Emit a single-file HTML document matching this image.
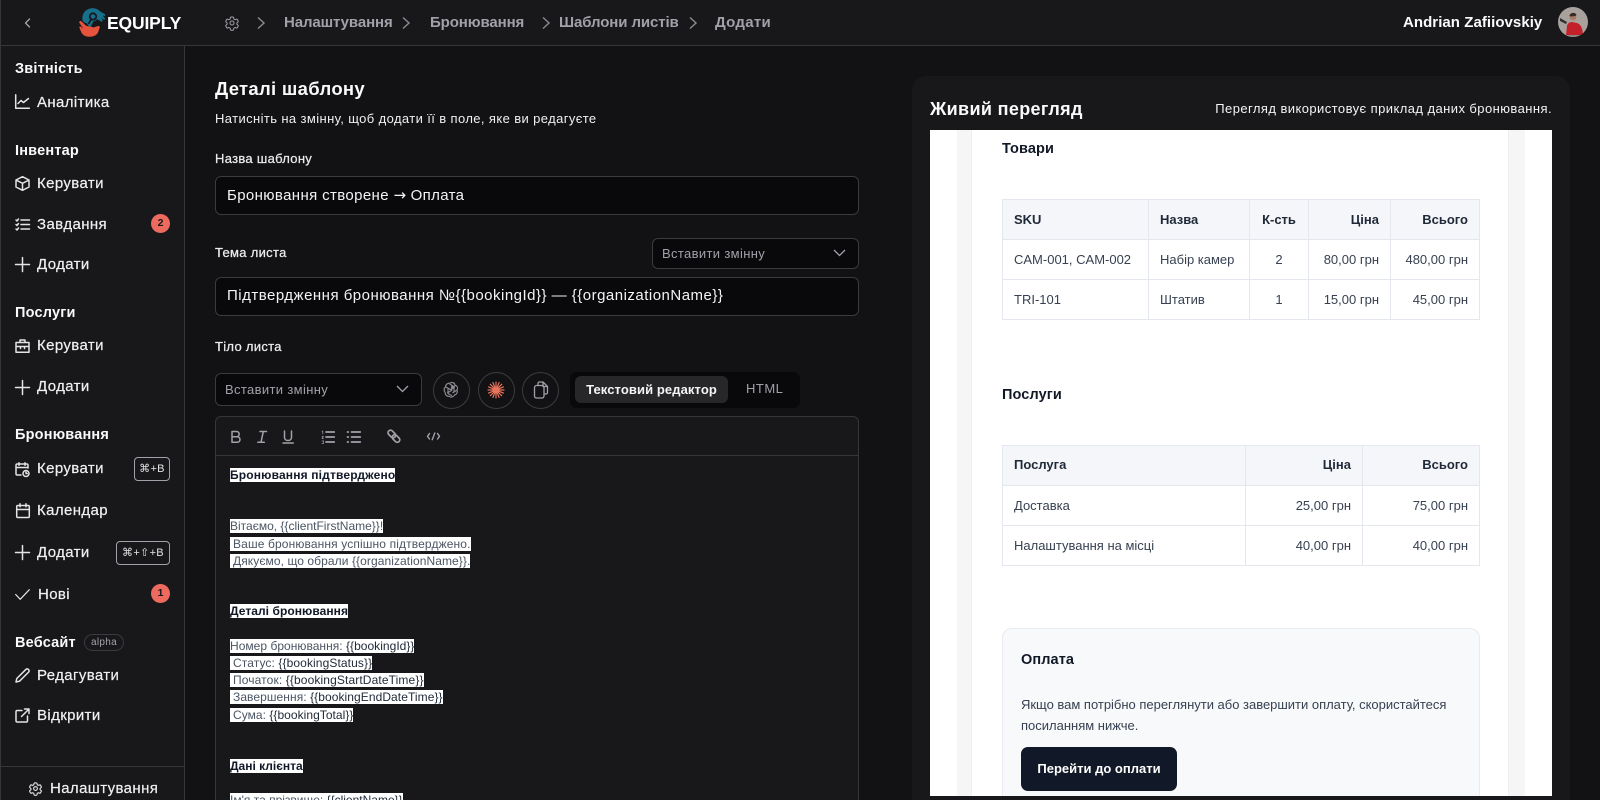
<!DOCTYPE html>
<html lang="uk"><head><meta charset="utf-8"><title>Equiply</title>
<style>
*{box-sizing:border-box}
html,body{margin:0;padding:0;width:1600px;height:800px;overflow:hidden;background:#121214;font-family:"Liberation Sans",sans-serif;color:#fafafa}
#root{position:absolute;left:0;top:0;width:1600px;height:800px;overflow:hidden;background:#121214}
.a{position:absolute}
.t{position:absolute;white-space:nowrap;line-height:20px}
svg{position:absolute;overflow:visible}
.i{fill:none;stroke:#e4e4e7;stroke-width:1.5;stroke-linecap:round;stroke-linejoin:round}
.h{font-size:14.5px;font-weight:700;color:#fafafa;left:15px;letter-spacing:.2px}
.n{font-size:15px;color:#f0f0f2;left:37px;letter-spacing:.38px;-webkit-text-stroke:.2px #f0f0f2}
.c{font-size:15px;font-weight:700;color:#a1a1aa;letter-spacing:-.1px}
.l{font-size:13px;left:215px;color:#ececef;letter-spacing:.3px;font-weight:400;-webkit-text-stroke:.25px #ececef}
.inp{position:absolute;left:215px;width:644px;height:39px;background:#09090b;border:1px solid #3a3a3f;border-radius:6px;font-size:15px;line-height:37px;padding-left:11px;color:#f4f4f5;white-space:nowrap;letter-spacing:.37px}
.sel{position:absolute;background:#09090b;border:1px solid #3a3a3f;border-radius:6px;font-size:13px;color:#a1a1aa;padding-left:9px;letter-spacing:.35px}
.cir{position:absolute;width:37px;height:37px;border:1px solid #3c3c41;border-radius:50%;top:372px}
.e{position:absolute;left:230px;height:14px;line-height:14px;background:#fff;color:#4b5563;font-size:12px;white-space:nowrap}
.e b{color:#111827}
.e i{font-style:normal;color:#1f2937}
.kbd{position:absolute;border:1px solid #a1a1aa;border-radius:4px;height:24px;font-size:11px;line-height:22px;text-align:center;color:#e4e4e7;letter-spacing:.3px}
.bd{position:absolute;left:151px;width:19px;height:19px;border-radius:50%;background:#ec6a5e;color:#18181b;font-size:10.5px;font-weight:700;text-align:center;line-height:19px}
.p{position:absolute;color:#374151;font-size:13px;line-height:20px;white-space:nowrap}
.th{color:#1f2937;font-weight:700}
.r{text-align:right}
.hl{position:absolute;background:#e5e7ef}
.cell{background:#f5f6fa;position:absolute}
</style></head><body><div id="root">

<!-- top bar -->
<div class="a" style="left:0;top:0;width:1600px;height:46px;background:#18181b;border-bottom:1px solid #36363a"></div>
<div class="a" style="left:0;top:0;width:1px;height:800px;background:#36363a;z-index:3"></div>
<svg style="left:22px;top:17px" width="12" height="12" viewBox="0 0 12 12"><path d="M7.5 2 3.5 6l4 4" fill="none" stroke="#a1a1aa" stroke-width="1.4" stroke-linecap="round" stroke-linejoin="round"/></svg>

<!-- logo -->
<svg style="left:78px;top:7px" width="30" height="31" viewBox="0 0 30 31">
<path d="M4.500 13C3.500 6 8.500 1.200 14.500 1.200c3 0 5.800 1 7.300 3l5 2.800c1 .8.300 2.200-1 1.900l-1.500-.6 2.500 2.700c.8 1-.3 2.200-1.400 1.500l-2.500-2 1.700 2.700c.5 1.100-.8 2-1.700 1.200L19 12c-1 1.500-2 2-3.500 2.300l-3 5.700c-2-1-3-2-3.500-3.500C7 16 5 15 4.500 13z" fill="#16708c"/>
<circle cx="15" cy="9.500" r="3.200" fill="none" stroke="#18181b" stroke-width="1.800"/>
<path d="M13 12.500l-2.500 4.500" stroke="#18181b" stroke-width="1.800"/>
<path d="M1.500 14.500c.6-.8 1.500-.6 2.200 0l3.800 3.700c1.500 1.300 3 .8 5 1.300l3 1 4.500-1.500c1.500-.3 2.200 1 1.500 2.200l-1.500 4.300c-1.500 3-4.500 4.200-8.500 4.200-3.500 0-6.500-1.300-8-4L1.500 21c-.6-1.200.6-2 1.500-1.200l2.500 2.200L1.500 16c-.4-.6-.3-1 0-1.500z" fill="#e5533d"/>
</svg>
<div class="t" style="left:107px;top:13px;font-size:17.500px;font-weight:700;color:#fff;letter-spacing:-.15px">EQUIPLY</div>

<!-- breadcrumb -->
<svg style="left:224px;top:15px" width="16" height="16" viewBox="0 0 24 24"><g fill="none" stroke="#a1a1aa" stroke-width="1.500" stroke-linecap="round" stroke-linejoin="round"><path d="M9.600 3.900c.1-.5.600-.9 1.100-.9h2.600c.5 0 1 .4 1.100.9l.2 1.600c.1.400.3.700.7.900l.7.400c.3.200.7.200 1.100.1l1.500-.6c.5-.2 1.100 0 1.400.5l1.300 2.300c.3.500.2 1-.3 1.400l-1.200 1c-.3.200-.5.600-.5 1v.8c0 .4.200.8.500 1l1.200 1c.5.400.6.900.3 1.400l-1.300 2.300c-.3.500-.9.700-1.400.5l-1.500-.6c-.4-.1-.8-.1-1.100.1l-.7.400c-.4.200-.6.500-.7.900l-.2 1.600c-.1.500-.6.900-1.100.9h-2.600c-.5 0-1-.4-1.100-.9l-.2-1.600c-.1-.4-.3-.7-.7-.9l-.7-.4c-.3-.2-.7-.2-1.100-.1l-1.500.6c-.5.200-1.100 0-1.400-.5l-1.300-2.300c-.3-.5-.2-1 .3-1.400l1.200-1c.3-.2.500-.6.500-1v-.8c0-.4-.2-.8-.5-1l-1.200-1c-.5-.4-.6-.9-.3-1.400l1.300-2.300c.3-.5.900-.7 1.400-.5l1.500.6c.4.100.8.100 1.100-.1l.7-.4c.4-.2.600-.5.700-.9z"/><circle cx="12" cy="12" r="3"/></g></svg>
<svg style="left:256px;top:16px" width="10" height="14" viewBox="0 0 10 14"><path d="M2 1.500 8 7l-6 5.500" fill="none" stroke="#8a8a92" stroke-width="1.400"/></svg>
<div class="t c" style="left:284px;top:13px">Налаштування</div>
<svg style="left:401px;top:16px" width="10" height="14" viewBox="0 0 10 14"><path d="M2 1.500 8 7l-6 5.500" fill="none" stroke="#8a8a92" stroke-width="1.400"/></svg>
<div class="t c" style="left:430px;top:13px">Бронювання</div>
<svg style="left:541px;top:16px" width="10" height="14" viewBox="0 0 10 14"><path d="M2 1.500 8 7l-6 5.500" fill="none" stroke="#8a8a92" stroke-width="1.400"/></svg>
<div class="t c" style="left:559px;top:13px">Шаблони листів</div>
<svg style="left:688px;top:16px" width="10" height="14" viewBox="0 0 10 14"><path d="M2 1.500 8 7l-6 5.500" fill="none" stroke="#8a8a92" stroke-width="1.400"/></svg>
<div class="t c" style="left:715px;top:13px;letter-spacing:.3px">Додати</div>

<div class="t" style="left:1403px;top:13px;font-size:15px;font-weight:700;color:#fafafa;letter-spacing:.05px">Andrian Zafiiovskiy</div>
<svg style="left:1558px;top:7px" width="30" height="30" viewBox="0 0 30 30"><defs><clipPath id="av"><circle cx="15" cy="15" r="15"/></clipPath></defs><g clip-path="url(#av)"><rect width="30" height="30" fill="#a8a19c"/><path d="M8 28l1-9c.5-3 3-4 5-4l5 1c3 1 5 4 5.500 8l.5 4z" fill="#c4202a"/><circle cx="15" cy="10" r="3.300" fill="#a87a68"/><path d="M11.500 9c0-3.500 6-4.500 7-1l-1 1-5 .5z" fill="#3a2a26"/><path d="M2 11l7 4-1 2-6-3z" fill="#2f2f2f"/><rect x="0" y="28" width="30" height="2" fill="#8c8682"/></g></svg>

<!-- sidebar -->
<div class="a" style="left:0;top:46px;width:185px;height:754px;background:#18181b;border-right:1px solid #36363a"></div>
<div class="a" style="left:0;top:766px;width:185px;height:1px;background:#36363a"></div>

<div class="t h" style="top:59px">Звітність</div>
<svg class="i" style="left:15px;top:94px" width="15" height="15" viewBox="0 0 15 15"><path d="M.7.7v13.600h13.600M3 9.500l3-3 2.500 2L13.500 4.500"/></svg>
<div class="t n" style="top:93px">Аналітика</div>

<div class="t h" style="top:141px">Інвентар</div>
<svg class="i" style="left:15px;top:176px" width="15" height="15" viewBox="0 0 15 15"><path d="M7.500.7l6.500 3.300v7L7.500 14.300 1 11V4zM1 4l6.500 3.300L14 4M7.500 7.300v7"/></svg>
<div class="t n" style="top:174px">Керувати</div>

<svg class="i" style="left:15px;top:218px" width="15" height="13" viewBox="0 0 15 13"><path d="M1 2l1 1 1.500-2M1 6.500l1 1 1.500-2M1 11l1 1 1.500-2M6 2h8.500M6 6.500h8.500M6 11h8.500"/></svg>
<div class="t n" style="top:215px">Завдання</div>
<div class="bd" style="top:214px">2</div>

<svg class="i" style="left:15px;top:257px" width="15" height="15" viewBox="0 0 15 15"><path d="M7.500.5v14M.5 7.500h14"/></svg>
<div class="t n" style="top:255px">Додати</div>

<div class="t h" style="top:303px">Послуги</div>
<svg class="i" style="left:15px;top:339px" width="15" height="14" viewBox="0 0 15 14"><path d="M1 3.500h13v9.800H1zM5 3.500V1h5v2.500M1 7.500h13M5.500 7.500v2M9.500 7.500v2"/></svg>
<div class="t n" style="top:336px">Керувати</div>

<svg class="i" style="left:15px;top:380px" width="15" height="15" viewBox="0 0 15 15"><path d="M7.500.5v14M.5 7.500h14"/></svg>
<div class="t n" style="top:377px">Додати</div>

<div class="t h" style="top:425px">Бронювання</div>
<svg class="i" style="left:15px;top:462px" width="15" height="15" viewBox="0 0 15 15"><path d="M6 13H2.200C1.500 13 1 12.500 1 11.800V3.200C1 2.500 1.500 2 2.200 2h9.600c.7 0 1.200.5 1.200 1.200V6M4 .7v2.500M10 .7v2.500M1 5.500h12"/><circle cx="11" cy="11.500" r="3"/><path d="M11 10v1.500h1.200"/></svg>
<div class="t n" style="top:459px">Керувати</div>
<div class="kbd" style="left:134px;top:457px;width:36px">⌘+B</div>

<svg class="i" style="left:16px;top:503px" width="14" height="15" viewBox="0 0 14 15"><path d="M1.800 2.500h10.400c.6 0 1.100.5 1.100 1.100v9.800c0 .6-.5 1.100-1.100 1.100H1.800c-.6 0-1.100-.5-1.100-1.100V3.600c0-.6.500-1.100 1.100-1.100zM4 .7v3M10 .7v3M.7 6.500h12.600"/></svg>
<div class="t n" style="top:501px">Календар</div>

<svg class="i" style="left:15px;top:545px" width="15" height="15" viewBox="0 0 15 15"><path d="M7.500.5v14M.5 7.500h14"/></svg>
<div class="t n" style="top:543px">Додати</div>
<div class="kbd" style="left:116px;top:541px;width:54px">⌘+⇧+B</div>

<svg style="left:15px;top:589px" width="15" height="11" viewBox="0 0 15 11"><path d="M.7 5.500l4.500 4.800L14.300.7" fill="none" stroke="#e4e4e7" stroke-width="1.200" stroke-linecap="round" stroke-linejoin="round"/></svg>
<div class="t n" style="left:38px;top:585px">Нові</div>
<div class="bd" style="top:584px">1</div>

<div class="t h" style="top:633px">Вебсайт</div>
<div class="a" style="left:84px;top:634px;width:40px;height:17px;border:1px solid #3a3a3f;border-radius:9px;font-size:10px;line-height:15px;text-align:center;color:#a1a1aa;letter-spacing:.3px">alpha</div>
<svg class="i" style="left:15px;top:668px" width="15" height="15" viewBox="0 0 15 15"><path d="M1 14l.8-3.500L11 1.300c.6-.6 1.600-.6 2.200 0l.5.500c.6.6.6 1.600 0 2.200L4.500 13.200z"/></svg>
<div class="t n" style="top:666px">Редагувати</div>
<svg class="i" style="left:15px;top:708px" width="15" height="15" viewBox="0 0 15 15"><path d="M7 2.500H2.200C1.500 2.500 1 3 1 3.700v9.100c0 .7.500 1.200 1.200 1.200h9.100c.7 0 1.200-.5 1.200-1.200V8M6.500 8.500 14 1M9.500 1H14v4.500"/></svg>
<div class="t n" style="top:706px">Відкрити</div>

<svg style="left:28px;top:781px" width="15" height="15" viewBox="0 0 24 24"><g fill="none" stroke="#e4e4e7" stroke-width="1.800" stroke-linecap="round" stroke-linejoin="round"><path d="M9.600 3.900c.1-.5.600-.9 1.100-.9h2.600c.5 0 1 .4 1.100.9l.2 1.600c.1.400.3.700.7.900l.7.400c.3.200.7.200 1.100.1l1.500-.6c.5-.2 1.100 0 1.400.5l1.300 2.300c.3.500.2 1-.3 1.400l-1.200 1c-.3.200-.5.600-.5 1v.8c0 .4.200.8.500 1l1.200 1c.5.400.6.900.3 1.400l-1.300 2.300c-.3.500-.9.700-1.400.5l-1.500-.6c-.4-.1-.8-.1-1.100.1l-.7.400c-.4.200-.6.500-.7.900l-.2 1.600c-.1.500-.6.900-1.100.9h-2.600c-.5 0-1-.4-1.100-.9l-.2-1.600c-.1-.4-.3-.7-.7-.9l-.7-.4c-.3-.2-.7-.2-1.100-.1l-1.500.6c-.5.200-1.100 0-1.400-.5l-1.300-2.300c-.3-.5-.2-1 .3-1.400l1.200-1c.3-.2.500-.6.500-1v-.8c0-.4-.2-.8-.5-1l-1.200-1c-.5-.4-.6-.9-.3-1.400l1.300-2.300c.3-.5.900-.7 1.400-.5l1.500.6c.4.100.8.100 1.100-.1l.7-.4c.4-.2.600-.5.700-.9z"/><circle cx="12" cy="12" r="3"/></g></svg>
<div class="t n" style="left:50px;top:779px">Налаштування</div>

<!-- form -->
<div class="t" style="left:215px;top:79px;font-size:18.500px;font-weight:700;color:#fafafa;letter-spacing:.3px">Деталі шаблону</div>
<div class="t" style="left:215px;top:109px;font-size:13px;color:#f0f0f2;letter-spacing:.39px">Натисніть на змінну, щоб додати її в поле, яке ви редагуєте</div>

<div class="t l" style="top:149px">Назва шаблону</div>
<div class="inp" style="top:176px">Бронювання створене <span style="font-family:'DejaVu Sans',sans-serif;letter-spacing:0">→</span> Оплата</div>
<div class="t l" style="top:243px">Тема листа</div>
<div class="sel" style="left:652px;top:238px;width:207px;height:31px;line-height:29px">Вставити змінну</div>
<svg style="left:833px;top:249px" width="13" height="8" viewBox="0 0 13 8"><path d="M1 1l5.500 5.500L12 1" fill="none" stroke="#a1a1aa" stroke-width="1.300"/></svg>
<div class="inp" style="top:277px;height:39px;line-height:35px;letter-spacing:.49px">Підтвердження бронювання №{{bookingId}} — {{organizationName}}</div>
<div class="t l" style="top:337px">Тіло листа</div>

<div class="sel" style="left:215px;top:373px;width:207px;height:33px;line-height:31px">Вставити змінну</div>
<svg style="left:396px;top:385px" width="13" height="8" viewBox="0 0 13 8"><path d="M1 1l5.500 5.500L12 1" fill="none" stroke="#a1a1aa" stroke-width="1.300"/></svg>

<div class="cir" style="left:433px"></div>
<svg style="left:443px;top:381px" width="18" height="18" viewBox="0 0 18 18"><g fill="none" stroke="#8f8f96" stroke-width="1.100"><path d="M7 2.200c2-1.500 4.600-.5 5 1.800 2.200.6 3.200 3 2 5 1 2.200-.3 4.500-2.500 5-1 2-3.500 2.800-5.500 1.300-2.200.2-4-1.600-3.800-3.800C.7 10 .7 7.300 2.500 6 2.500 3.600 4.700 1.800 7 2.200z"/><path d="M6.500 3l4.500 2.600v5M3 6l4.500 2.600 4.300-2.500M4.200 12l4.500-2.600 0-5M12.500 4.500 8 7M9 14.800l-4-2.300v-5M14 9l-4.500 3"/></g></svg>

<div class="cir" style="left:478px"></div>
<svg style="left:487px;top:381px" width="18" height="18" viewBox="0 0 18 18"><g stroke="#e8735a" stroke-width="1.200" stroke-linecap="round"><path d="M9 1v16M1 9h16M3.300 3.300l11.400 11.400M14.700 3.300 3.300 14.700M5.900 1.600l6.200 14.800M12.100 1.600 5.900 16.400M1.600 5.900l14.800 6.200M1.600 12.100l14.800-6.200"/></g><circle cx="9" cy="9" r="2.200" fill="#e8735a"/></svg>

<div class="cir" style="left:522px"></div>
<svg style="left:533px;top:381px" width="16" height="18" viewBox="0 0 16 18"><g fill="none" stroke="#a1a1aa" stroke-width="1.300" stroke-linejoin="round"><path d="M5 4V2.500C5 1.700 5.500 1 6.300 1H10l4.500 4.500v6c0 .8-.6 1.500-1.400 1.500H11.500"/><path d="M10 1v4.500h4.500"/><rect x="1.500" y="4.500" width="9.500" height="12.500" rx="2"/></g></svg>

<div class="a" style="left:570px;top:372px;width:230px;height:36px;background:#09090b;border-radius:7px"></div>
<div class="a" style="left:575px;top:376px;width:153px;height:27px;background:#27272a;border-radius:6px;font-size:13px;font-weight:700;color:#f4f4f5;line-height:27px;text-align:center;letter-spacing:.1px">Текстовий редактор</div>
<div class="t" style="left:746px;top:379px;font-size:13px;color:#a1a1aa;font-weight:400;letter-spacing:.5px">HTML</div>

<!-- editor -->
<div class="a" style="left:215px;top:416px;width:644px;height:400px;background:#18181b;border:1px solid #36363a;border-radius:6px 6px 0 0"></div>
<div class="a" style="left:215px;top:455px;width:644px;height:1px;background:#36363a"></div>
<svg style="left:220px;top:422px" width="230" height="30" viewBox="0 0 230 30"><g fill="none" stroke="#a1a1aa" stroke-width="1.500" stroke-linecap="round" stroke-linejoin="round">
<path d="M12 9.500h4.500c3.500 0 3.500 5.200 0 5.200H12zM12 14.700h5.200c3.700 0 3.700 5.600 0 5.600H12z"/>
<path d="M40 9.500h6.500M37.800 20.300h6.500M43.300 9.500l-2.300 10.800"/>
<path d="M64.500 9v6.500c0 4 7 4 7 0V9M63 21h10.300"/>
<path d="M106 10h8.300M106 15h8.300M106 20h8.300" stroke-width="1.700"/><path d="M102 9.500l.8-.5v3M102 14.500h1.500l-1.500 2h1.500M102 19h1.500v2.500H102" stroke-width=".7"/>
<path d="M131.500 10h8.800M131.500 15h8.800M131.500 20h8.800M127.500 10h.8M127.500 15h.8M127.500 20h.8" stroke-width="1.700"/>
<rect x="-4.300" y="-2.500" width="8.600" height="5" rx="2.500" transform="translate(171.800 12) rotate(45)" stroke-width="1.700"/>
<rect x="-4.300" y="-2.500" width="8.600" height="5" rx="2.500" transform="translate(176 16.500) rotate(45)" stroke-width="1.700"/>
<path d="M209.500 11.500 207.500 14.300l2 2.700M217.500 11.500l2 2.800-2 2.700M214.800 11l-2.600 6.700" stroke-width="1.400"/>
</g></svg>

<div class="e" style="top:468px;font-weight:700;letter-spacing:.16px"><b>Бронювання підтверджено</b></div>
<div class="e" style="top:519px">Вітаємо, <i style="color:#4b5563">{{clientFirstName}}</i>!</div>
<div class="e" style="top:537px;padding-left:3px;letter-spacing:.13px">Ваше бронювання успішно підтверджено.</div>
<div class="e" style="top:554px;padding-left:3px;letter-spacing:.08px">Дякуємо, що обрали <i style="color:#4b5563">{{organizationName}}</i>.</div>
<div class="e" style="top:604px;font-weight:700;letter-spacing:.06px"><b>Деталі бронювання</b></div>
<div class="e" style="top:639px;letter-spacing:.03px">Номер бронювання: <i>{{bookingId}}</i></div>
<div class="e" style="top:656px;padding-left:3px;letter-spacing:.1px">Статус: <i>{{bookingStatus}}</i></div>
<div class="e" style="top:673px;padding-left:3px;letter-spacing:.12px">Початок: <i>{{bookingStartDateTime}}</i></div>
<div class="e" style="top:690px;padding-left:3px;letter-spacing:.07px">Завершення: <i>{{bookingEndDateTime}}</i></div>
<div class="e" style="top:708px;padding-left:3px;letter-spacing:.04px">Сума: <i>{{bookingTotal}}</i></div>
<div class="e" style="top:759px;font-weight:700"><b>Дані клієнта</b></div>
<div class="e" style="top:793px">Ім'я та прізвище: <i>{{clientName}}</i></div>

<!-- preview card -->
<div class="a" style="left:912px;top:76px;width:658px;height:740px;background:#18181b;border-radius:14px"></div>
<div class="t" style="left:930px;top:99px;font-size:18px;font-weight:700;color:#fafafa;letter-spacing:.35px">Живий перегляд</div>
<div class="t" style="right:48px;top:99px;font-size:13px;color:#f4f4f5;letter-spacing:.43px">Перегляд використовує приклад даних бронювання.</div>

<div class="a" style="left:930px;top:130px;width:622px;height:666px;background:#fff;overflow:hidden">
 <div class="a" style="left:27px;top:0;width:568px;height:666px;background:#f6f6f7"></div>
 <div class="a" style="left:41px;top:0;width:538px;height:666px;background:#fff;border-left:1px solid #eeeff1;border-right:1px solid #eeeff1"></div>
</div>

<div class="t" style="left:1002px;top:139px;font-size:14.500px;font-weight:700;color:#111827;letter-spacing:.1px">Товари</div>

<!-- table 1 -->
<div class="cell" style="left:1002px;top:199px;width:477px;height:41px"></div>
<div class="hl" style="left:1002px;top:199px;width:478px;height:1px"></div>
<div class="hl" style="left:1002px;top:239px;width:478px;height:1px"></div>
<div class="hl" style="left:1002px;top:279px;width:478px;height:1px"></div>
<div class="hl" style="left:1002px;top:319px;width:478px;height:1px"></div>
<div class="hl" style="left:1002px;top:199px;width:1px;height:121px"></div>
<div class="hl" style="left:1148px;top:199px;width:1px;height:121px"></div>
<div class="hl" style="left:1249px;top:199px;width:1px;height:121px"></div>
<div class="hl" style="left:1308px;top:199px;width:1px;height:121px"></div>
<div class="hl" style="left:1390px;top:199px;width:1px;height:121px"></div>
<div class="hl" style="left:1479px;top:199px;width:1px;height:121px"></div>

<div class="p th" style="left:1014px;top:210px">SKU</div>
<div class="p th" style="left:1160px;top:210px">Назва</div>
<div class="p th" style="left:1249px;top:210px;width:60px;text-align:center">К-сть</div>
<div class="p th r" style="left:1309px;top:210px;width:70px">Ціна</div>
<div class="p th r" style="left:1391px;top:210px;width:77px">Всього</div>

<div class="p" style="left:1014px;top:250px">CAM-001, CAM-002</div>
<div class="p" style="left:1160px;top:250px">Набір камер</div>
<div class="p" style="left:1249px;top:250px;width:60px;text-align:center">2</div>
<div class="p r" style="left:1309px;top:250px;width:70px">80,00 грн</div>
<div class="p r" style="left:1391px;top:250px;width:77px">480,00 грн</div>

<div class="p" style="left:1014px;top:290px">TRI-101</div>
<div class="p" style="left:1160px;top:290px">Штатив</div>
<div class="p" style="left:1249px;top:290px;width:60px;text-align:center">1</div>
<div class="p r" style="left:1309px;top:290px;width:70px">15,00 грн</div>
<div class="p r" style="left:1391px;top:290px;width:77px">45,00 грн</div>

<div class="t" style="left:1002px;top:385px;font-size:14.500px;font-weight:700;color:#111827;letter-spacing:.1px">Послуги</div>

<!-- table 2 -->
<div class="cell" style="left:1002px;top:445px;width:477px;height:41px"></div>
<div class="hl" style="left:1002px;top:445px;width:478px;height:1px"></div>
<div class="hl" style="left:1002px;top:485px;width:478px;height:1px"></div>
<div class="hl" style="left:1002px;top:525px;width:478px;height:1px"></div>
<div class="hl" style="left:1002px;top:565px;width:478px;height:1px"></div>
<div class="hl" style="left:1002px;top:445px;width:1px;height:121px"></div>
<div class="hl" style="left:1245px;top:445px;width:1px;height:121px"></div>
<div class="hl" style="left:1362px;top:445px;width:1px;height:121px"></div>
<div class="hl" style="left:1479px;top:445px;width:1px;height:121px"></div>

<div class="p th" style="left:1014px;top:455px">Послуга</div>
<div class="p th r" style="left:1246px;top:455px;width:105px">Ціна</div>
<div class="p th r" style="left:1363px;top:455px;width:105px">Всього</div>
<div class="p" style="left:1014px;top:496px">Доставка</div>
<div class="p r" style="left:1246px;top:496px;width:105px">25,00 грн</div>
<div class="p r" style="left:1363px;top:496px;width:105px">75,00 грн</div>
<div class="p" style="left:1014px;top:536px">Налаштування на місці</div>
<div class="p r" style="left:1246px;top:536px;width:105px">40,00 грн</div>
<div class="p r" style="left:1363px;top:536px;width:105px">40,00 грн</div>

<!-- payment -->
<div class="a" style="left:1002px;top:628px;width:478px;height:168px;background:#f8f9fa;border:1px solid #e9ebee;border-bottom:0;border-radius:10px 10px 0 0"></div>
<div class="t" style="left:1021px;top:650px;font-size:14.500px;font-weight:700;color:#111827;letter-spacing:.1px">Оплата</div>
<div class="p" style="left:1021px;top:695px;letter-spacing:-.01px">Якщо вам потрібно переглянути або завершити оплату, скористайтеся</div>
<div class="p" style="left:1021px;top:716px">посиланням нижче.</div>
<div class="a" style="left:1021px;top:747px;width:156px;height:44px;background:#111827;border-radius:7px;color:#fff;font-size:13px;font-weight:700;text-align:center;line-height:44px">Перейти до оплати</div>

</div></body></html>
